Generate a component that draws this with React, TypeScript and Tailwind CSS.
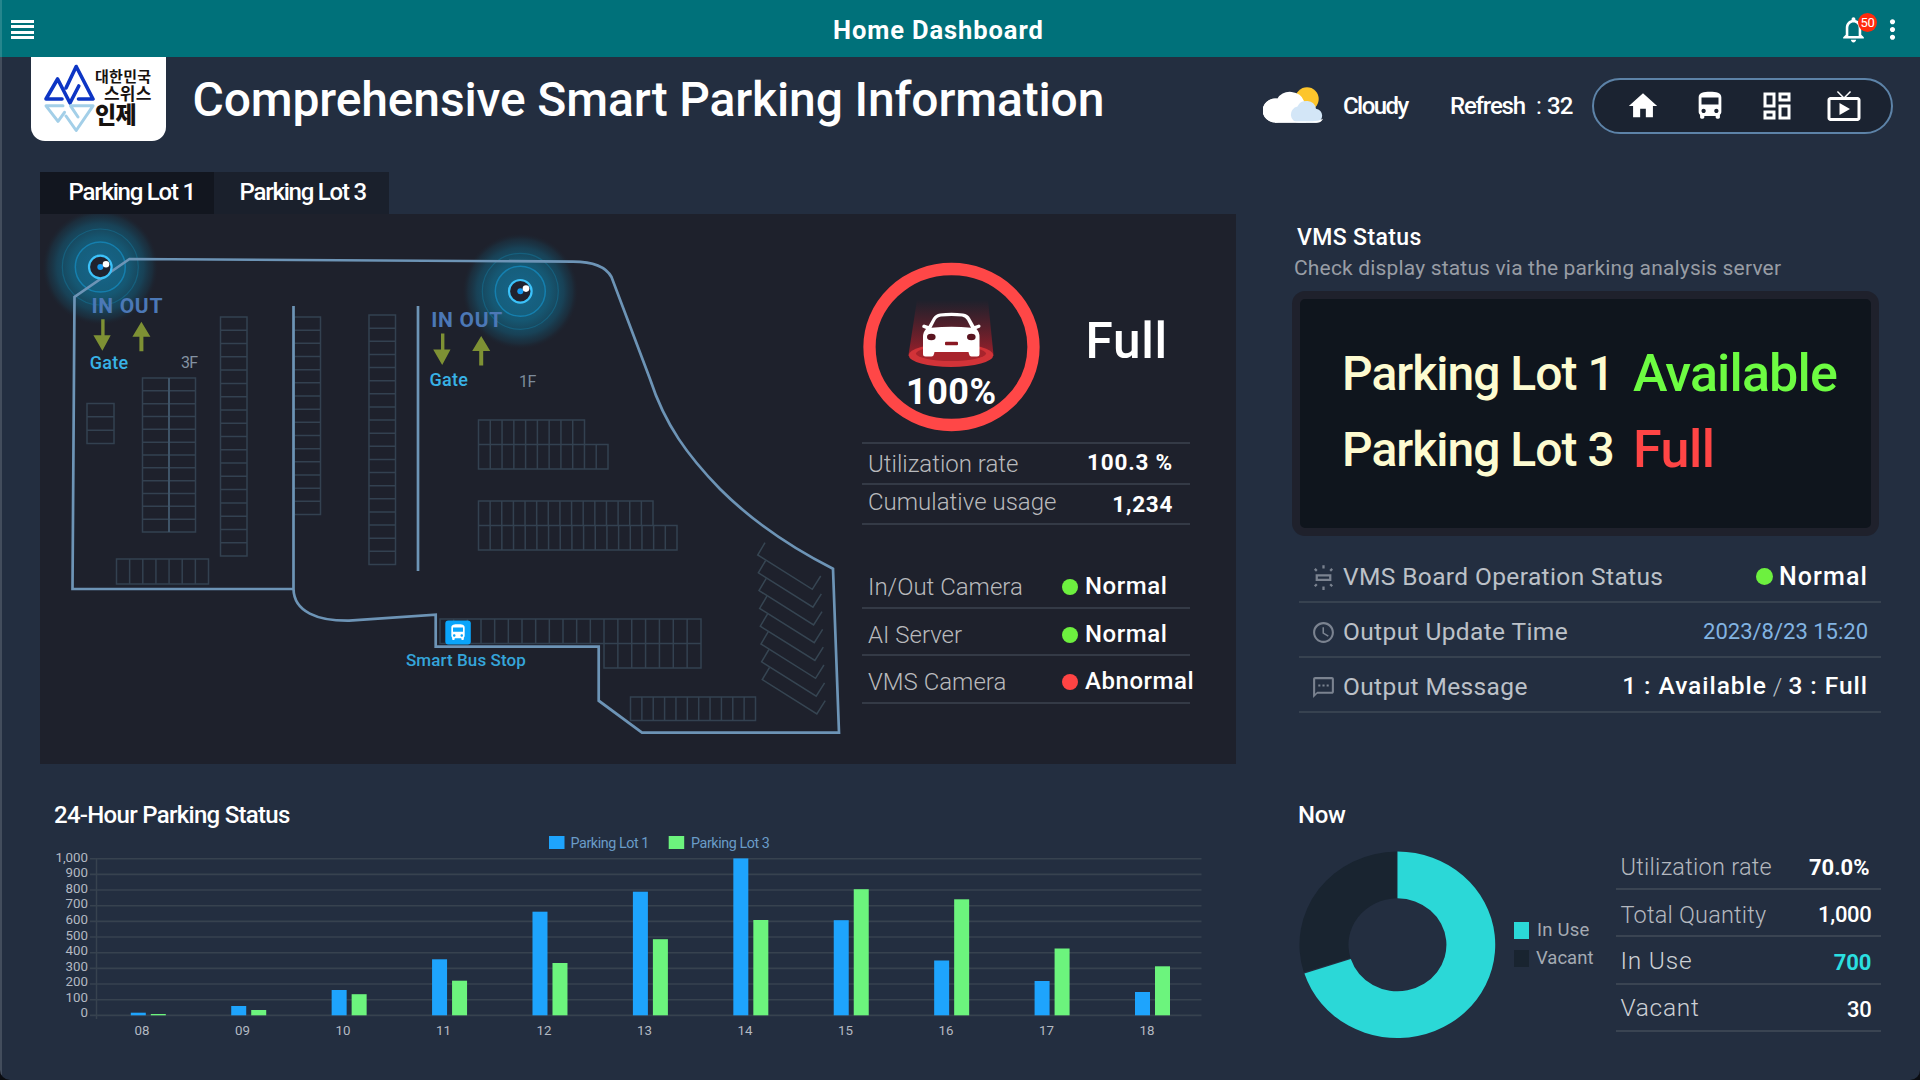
import type { ReactNode } from "react";
import {
  MdAccessTime,
  MdDirectionsBus,
  MdHome,
  MdMoreVert,
  MdNotificationsNone,
  MdOutlineDashboard,
  MdOutlineLiveTv,
  MdOutlineTextsms,
  MdOutlineWbIridescent,
} from "react-icons/md";

/* ---------- Top bar ---------- */

function TopBar() {
  return (
    <header className="flex h-[57px] shrink-0 items-center bg-[#00717a] pt-[2px]">
      <div className="w-[833px] pl-[11px]">
        <div className="flex w-[23px] flex-col gap-[2.4px]">
          <div className="h-[3px] bg-white" />
          <div className="h-[3px] bg-white" />
          <div className="h-[3px] bg-white" />
          <div className="h-[3px] bg-white" />
        </div>
      </div>
      <h1 className="mt-[2px] text-[25.5px] leading-none font-bold tracking-[0.9px] whitespace-nowrap">Home Dashboard</h1>
      <div className="mr-[12px] ml-auto flex items-center gap-[8px]">
        <div className="relative">
          <MdNotificationsNone size={31} />
          <span className="absolute -top-[1px] left-[20px] flex h-[19px] w-[19px] items-center justify-center rounded-full bg-[#ff2a0c] text-[13px] tracking-[-0.3px]">
            50
          </span>
        </div>
        <MdMoreVert size={31} />
      </div>
    </header>
  );
}

function Logo() {
  return (
    <div className="ml-[31px] flex h-[84px] w-[135px] rounded-b-[14px] bg-white text-[#17120f]">
      <svg width="64" height="84" viewBox="31 57 64 84" fill="none" strokeWidth="3.6" strokeLinecap="round" strokeLinejoin="round">
        <path d="M62 99H46l11.600-20L70 103l8.800-17" stroke="#0d35c4" />
        <path d="M66 88l10.200-21.500L93 99H78.500" stroke="#0d35c4" />
        <path d="M63 105.800H46l12 15.500 6.500-9" stroke="#a3cfe8" strokeWidth="3" />
        <path d="M66 116l10.200 14.500L93 105.800H70.500L78 117" stroke="#a3cfe8" strokeWidth="3" />
      </svg>
      <div className="flex flex-col font-['Noto_Sans_CJK_KR',sans-serif] leading-none font-bold whitespace-nowrap">
        <span className="mt-[11px] text-[15px] tracking-[0.3px]">대한민국</span>
        <span className="mt-[1px] ml-[9px] text-[17px] tracking-[0.2px]">스위스</span>
        <span className="mt-[1px] text-[23px] font-black tracking-[-0.7px]">인제</span>
      </div>
    </div>
  );
}

function WeatherIcon() {
  return (
    <svg width="61" height="40" viewBox="1263 86 61 40">
      <circle cx="1307" cy="99" r="11.700" fill="#fdc52c" />
      <path
        d="M1276 122.500a13 11.500 0 0 1 0-24h1.500a14.500 13 0 0 1 26.500 2.500l2 21.500z"
        fill="#fff"
      />
      <circle cx="1275" cy="110.500" r="12" fill="#fff" />
      <path
        d="M1299 122.700a8.500 8.200 0 0 1-1.500-16.200a9.800 9.500 0 0 1 18.500 2.300a7 7 0 0 1 0 13.900z"
        fill="#d3e6f7"
      />
      <path d="M1275 122.700h42a6.500 6.500 0 0 0 6-4q-5 3-13 2.500h-35z" fill="#fff" />
    </svg>
  );
}

function PillIcon({ children }: { children: ReactNode }) {
  return <div className="flex w-[67px] justify-center">{children}</div>;
}

function TitleRow() {
  return (
    <div className="flex h-[115px] shrink-0 items-start whitespace-nowrap">
      <Logo />
      <h2 className="mt-[15px] ml-[26.500px] text-[48px] leading-[56px] font-medium tracking-[-0.140px]">
        Comprehensive Smart Parking Information
      </h2>
      <div className="mt-[21px] mr-[27px] ml-auto flex h-[56px] items-center text-[24px] leading-none">
        <WeatherIcon />
        <span className="ml-[19px] w-[107px] font-medium tracking-[-1.550px]">Cloudy</span>
        <span className="w-[86px] font-medium tracking-[-1.200px]">Refresh</span>
        <span className="w-[11px]">:</span>
        <span className="w-[45px] font-medium tracking-[-0.900px]">32</span>
        <nav className="flex h-[56px] w-[301px] items-center justify-center rounded-full border-2 border-[#5d83a8] bg-[#1b2331] pl-[1px]">
          <PillIcon><MdHome size={34} /></PillIcon>
          <PillIcon><MdDirectionsBus size={34} /></PillIcon>
          <PillIcon><MdOutlineDashboard size={36} /></PillIcon>
          <PillIcon><MdOutlineLiveTv size={36} /></PillIcon>
        </nav>
      </div>
    </div>
  );
}

/* ---------- Parking map ---------- */

type Block = { x: number; y: number; w: number; h: number; cols: number; rows: number };

const BLOCKS: Block[] = [
  { x: 87, y: 403.5, w: 27, h: 40, cols: 1, rows: 3 },
  { x: 142.5, y: 378, w: 53, h: 154, cols: 2, rows: 12 },
  { x: 116.5, y: 559, w: 92, h: 25, cols: 7, rows: 1 },
  { x: 220.5, y: 317, w: 26.5, h: 239, cols: 1, rows: 18 },
  { x: 294, y: 317, w: 26.5, h: 197.5, cols: 1, rows: 15 },
  { x: 369, y: 315, w: 26.5, h: 249.5, cols: 1, rows: 19 },
  { x: 478.5, y: 420, w: 106, h: 24.5, cols: 9, rows: 1 },
  { x: 478.5, y: 444.5, w: 129.5, h: 24.5, cols: 11, rows: 1 },
  { x: 478.5, y: 501, w: 174.5, h: 24.5, cols: 15, rows: 1 },
  { x: 478.5, y: 525.5, w: 198.5, h: 24.5, cols: 17, rows: 1 },
  { x: 440, y: 619, w: 164, h: 24.5, cols: 12, rows: 1 },
  { x: 604, y: 619, w: 97, h: 49, cols: 7, rows: 2 },
  { x: 630.5, y: 697, w: 125, h: 23.5, cols: 11, rows: 1 },
];

function blockPath({ x, y, w, h, cols, rows }: Block) {
  let d = `M${x} ${y}h${w}v${h}h${-w}z`;
  for (let i = 1; i < cols; i++) d += `M${x + (w * i) / cols} ${y}v${h}`;
  for (let i = 1; i < rows; i++) d += `M${x} ${y + (h * i) / rows}h${w}`;
  return d;
}

function Glow({ x, y }: { x: number; y: number }) {
  return (
    <g transform={`translate(${x} ${y})`}>
      <circle r="58" fill="url(#glow)" />
      <circle r="38" fill="none" stroke="#1583ab" strokeOpacity="0.400" strokeWidth="1.200" />
      <circle r="25" fill="#1787b5" fillOpacity="0.120" stroke="#158fc4" strokeOpacity="0.700" strokeWidth="1.500" />
    </g>
  );
}

function Camera({ x, y }: { x: number; y: number }) {
  return (
    <g transform={`translate(${x} ${y})`}>
      <circle r="11.300" fill="#20222f" stroke="#3cc2fa" strokeWidth="2.200" />
      <circle r="3" fill="#149bf5" />
      <circle cx="5.700" cy="-2.700" r="3.300" fill="#fff" />
    </g>
  );
}

function Gate({ x, y, gateY }: { x: number; y: number; gateY: number }) {
  return (
    <g transform={`translate(${x} ${y})`}>
      <text x="-1.300" y="0.300" fontSize="21" fontWeight="700" letterSpacing="0.700" fill="#4c78b6">
        IN OUT
      </text>
      <g fill="#7e9134">
        <path d="M8.500 7h3.400v16h6.100l-8.300 15.500l-9-15.500h7.800z" />
        <path d="M48.700 9.500l9 15h-7v14.500h-4v-14.500h-7z" />
      </g>
      <text x="-3" y={gateY} fontSize="18" fontWeight="500" letterSpacing="0.300" fill="#38b2e6">
        Gate
      </text>
    </g>
  );
}

function ParkingMap() {
  return (
    <svg width="810" height="550" viewBox="40 214 810 550" className="shrink-0">
      <defs>
        <radialGradient id="glow">
          <stop offset="0" stopColor="#156a8d" stopOpacity="0.900" />
          <stop offset="0.500" stopColor="#14617f" stopOpacity="0.850" />
          <stop offset="0.750" stopColor="#15536d" stopOpacity="0.650" />
          <stop offset="0.900" stopColor="#183f53" stopOpacity="0.400" />
          <stop offset="1" stopColor="#1b2633" stopOpacity="0" />
        </radialGradient>
      </defs>

      <path d={BLOCKS.map(blockPath).join("")} fill="none" stroke="#334150" strokeWidth="1.500" />
      <path d="M169 378v154" stroke="#3f5468" strokeWidth="2" />
      {Array.from({ length: 8 }, (_, i) => (
        <path
          key={i}
          d="M765 542.700L757.700 555l54.600 34.300l8.400-13.300"
          transform={`translate(${i * 0.65} ${i * 17.8})`}
          fill="none"
          stroke="#364552"
          strokeWidth="1.500"
        />
      ))}

      <Glow x={100.3} y={267} />
      <Glow x={520.3} y={291.3} />

      <g fill="none" stroke="#6d94b6" strokeWidth="2.700">
        <path d="M294 589H72.500L74.500 297L129.500 259L573 261.600C594 261.600 606 267 611.500 277L650 379C665 425 688 456 720 489C752 521 790 547 833 568.800L839 732.700H642L598.700 700.700V646.700H435.700V614.700L349 620.700C318 621 294 612 293.500 589V306" />
        <path d="M418 306V571" />
      </g>

      <Camera x={100.3} y={267} />
      <Camera x={520.3} y={291.3} />
      <Gate x={92.7} y={312.3} gateY={57} />
      <Gate x={432.5} y={326.5} gateY={59.8} />

      <text x="181" y="368" fontSize="16" letterSpacing="-0.800" fill="#8492a2">3F</text>
      <text x="519" y="386.600" fontSize="16" letterSpacing="-0.500" fill="#7d8b9b">1F</text>

      <rect x="445.300" y="620.500" width="25.500" height="24" rx="3" fill="#0aa5fb" />
      <MdDirectionsBus x={448} y={622.5} size={20} color="#fff" />
      <text x="406" y="666" fontSize="17" fontWeight="500" letterSpacing="0.080" fill="#35a5da">
        Smart Bus Stop
      </text>
    </svg>
  );
}

/* ---------- Lot statistics ---------- */

function Gauge() {
  return (
    <svg width="190" height="228" viewBox="862 214 190 228" className="shrink-0 overflow-visible">
      <defs>
        <linearGradient id="beam" x1="0" y1="0" x2="0" y2="1">
          <stop offset="0" stopColor="#a01c28" stopOpacity="0" />
          <stop offset="1" stopColor="#b81f2a" stopOpacity="0.800" />
        </linearGradient>
      </defs>
      <ellipse cx="951.500" cy="347" rx="82" ry="78" fill="none" stroke="#ff4747" strokeWidth="12.300" />
      <path d="M917 300H988L993.500 355H908.500z" fill="url(#beam)" />
      <ellipse cx="951" cy="355.300" rx="42.300" ry="11.700" fill="#d23338" />
      <ellipse cx="951" cy="353.500" rx="35" ry="7.500" fill="#a8242c" />
      <path
        fill="#fff"
        fillRule="evenodd"
        d="M940 313.500Q951.500 312 963 313.500Q968 314 970 318L974.500 326L979 324.500Q981.500 325.500 980 327.500L976.500 329Q979.500 332 979.500 337V354Q979.500 356.500 977 356.500H971.500Q969.500 356.500 969 354L968.500 352H934.500L934 354Q933.500 356.500 931.500 356.500H925.500Q923 356.500 923 354V337Q923 332 926 329L922.500 327.500Q921.500 325.500 924 324.500L928.500 326L933 318Q935.500 314 940 313.500zM941 316.500Q937 317 935.500 320L931.500 327.800Q951.500 325.500 971 327.800L967 320Q965.500 317 962 316.500Q951.500 315.300 941 316.500z"
      />
      <ellipse cx="931.300" cy="337" rx="4.300" ry="3.200" fill="#5a1420" />
      <ellipse cx="971.300" cy="337" rx="4.300" ry="3.200" fill="#5a1420" />
      <rect x="945" y="341.700" width="13" height="3.600" rx="1" fill="#8a1822" />
      <text x="906" y="403.500" fontSize="36" fontWeight="700" letterSpacing="0.500" fill="#fff">
        100%
      </text>
    </svg>
  );
}

function StatusRow({ label, ok, value }: { label: string; ok: boolean; value: string }) {
  return (
    <div className="flex h-[47.500px] items-center border-b-2 border-[#343a46] pt-[7px]">
      <span className="w-[200px] shrink-0 pl-[6px] font-light text-[#b9babd]">{label}</span>
      <span
        className={
          ok
            ? "h-[16px] w-[16px] shrink-0 rounded-full bg-[#6df03f]"
            : "h-[16px] w-[16px] shrink-0 rounded-full bg-[#ff4444]"
        }
      />
      <span className="-mt-[2px] pl-[7px] font-medium tracking-[0.55px]">{value}</span>
    </div>
  );
}

function LotStats() {
  return (
    <div className="ml-[12px] w-[328px] text-[24px] leading-none whitespace-nowrap">
      <div className="flex h-[228px]">
        <Gauge />
        <span className="mt-[103px] ml-[33.500px] text-[49.500px] font-medium tracking-[0.700px]">Full</span>
      </div>
      <div className="flex h-[43px] items-center justify-between border-y-2 border-[#343a46] pr-[17px] pl-[6px]">
        <span className="font-light text-[#b9babd]">Utilization rate</span>
        <span className="-mt-[2px] text-[22.500px] font-bold tracking-[0.800px]">100.3 %</span>
      </div>
      <div className="flex h-[40px] items-center justify-between border-b-2 border-[#343a46] pr-[17px] pl-[6px]">
        <span className="-mt-[5px] font-light tracking-[0.020px] text-[#b9babd]">Cumulative usage</span>
        <span className="mt-[1px] text-[22.500px] font-bold tracking-[0.700px]">1,234</span>
      </div>
      <div className="mt-[36px]">
        <StatusRow label="In/Out Camera" ok value="Normal" />
        <StatusRow label="AI Server" ok value="Normal" />
        <StatusRow label="VMS Camera" ok={false} value="Abnormal" />
      </div>
    </div>
  );
}

/* ---------- 24-hour bar chart ---------- */

const HOURS = [
  { h: "08", lot1: 1012.7, lot3: 1014 },
  { h: "09", lot1: 1006, lot3: 1010 },
  { h: "10", lot1: 990, lot3: 994.2 },
  { h: "11", lot1: 959.3, lot3: 980.7 },
  { h: "12", lot1: 911.7, lot3: 963 },
  { h: "13", lot1: 891.7, lot3: 939.2 },
  { h: "14", lot1: 858.4, lot3: 920 },
  { h: "15", lot1: 920.2, lot3: 889.2 },
  { h: "16", lot1: 960.5, lot3: 899.3 },
  { h: "17", lot1: 981, lot3: 948.5 },
  { h: "18", lot1: 992, lot3: 966.3 },
];

const TICKS = ["1,000", "900", "800", "700", "600", "500", "400", "300", "200", "100", "0"];

function HourlyChart() {
  return (
    <svg width="1196" height="216" viewBox="40 829 1196 216">
      <rect x="549" y="836" width="15.500" height="13" fill="#1ea4fd" />
      <text x="570.500" y="848" fontSize="14.300" letterSpacing="-0.420" fill="#6a9cc8">Parking Lot 1</text>
      <rect x="668.700" y="836" width="15.500" height="13" fill="#6cf47d" />
      <text x="691" y="848" fontSize="14.300" letterSpacing="-0.420" fill="#6a9cc8">Parking Lot 3</text>
      {TICKS.map((t, i) => (
        <g key={t}>
          <path d={`M90 ${858.7 + i * 15.67}H1201.500`} stroke="#37424f" strokeWidth="1.600" />
          <text x="88" y={861.7 + i * 15.57} fontSize="13.300" textAnchor="end" fill="#b3b9c2">
            {t}
          </text>
        </g>
      ))}
      <path d="M96.500 858V1019" stroke="#37424f" strokeWidth="1.500" />
      {HOURS.map(({ h, lot1, lot3 }, i) => (
        <g key={h}>
          <rect x={130.8 + i * 100.42} y={lot1} width="15" height={1015.3 - lot1} fill="#1ea4fd" />
          <rect x={150.8 + i * 100.42} y={lot3} width="15" height={1015.3 - lot3} fill="#6cf47d" />
          <text x={142 + i * 100.5} y="1035" fontSize="13.300" textAnchor="middle" fill="#b3b9c2">
            {h}
          </text>
        </g>
      ))}
    </svg>
  );
}

function LeftColumn() {
  return (
    <div className="ml-[40px] flex w-[1196px] flex-col">
      <div className="flex h-[42px] text-[24px] leading-none font-medium whitespace-nowrap">
        <div className="w-[174px] bg-[#12161f] pt-[8px] pl-[28.500px] tracking-[-1.230px]">Parking Lot 1</div>
        <div className="w-[175px] bg-[#1a202c] pt-[8px] pl-[25.500px] tracking-[-1.230px]">Parking Lot 3</div>
      </div>
      <div className="flex h-[550px] bg-[#1e212c]">
        <ParkingMap />
        <LotStats />
      </div>
      <h3 className="mt-[37px] ml-[14px] text-[24px] leading-[28px] font-medium tracking-[-0.710px]">24-Hour Parking Status</h3>
      <HourlyChart />
    </div>
  );
}

/* ---------- VMS ---------- */

function InfoRow({ icon, label, children }: { icon: ReactNode; label: string; children: ReactNode }) {
  return (
    <div className="ml-[7px] flex h-[55px] items-center border-b-2 border-[#374250] pt-[5px] pr-[13px]">
      <span className="flex w-[44px] justify-center pl-[5px] text-[#7b8390]">{icon}</span>
      <span className="text-[24.500px] tracking-[0.380px] text-[#bcc1c8]">{label}</span>
      <span className="-mt-[1px] ml-auto flex items-center">{children}</span>
    </div>
  );
}

function VmsStatus() {
  return (
    <section className="text-[24px] leading-none whitespace-nowrap">
      <h3 className="ml-[5px] pt-[1px] text-[23px] leading-[28px] font-medium tracking-[0.380px]">VMS Status</h3>
      <p className="mt-[2px] ml-[2px] text-[21px] leading-[28px] tracking-[0.170px] text-[#989da5]">
        Check display status via the parking analysis server
      </p>
      <div className="mt-[9px] flex h-[245px] w-[587px] flex-col rounded-[13px] border-[8.500px] border-[#1f212c] bg-[#0f151d] pt-[37px] pl-[42px]">
        <div className="flex h-[76px] items-center">
          <span className="w-[291px] text-[48px] font-medium tracking-[-1.000px] text-[#fdfbd0]">Parking Lot 1</span>
          <span className="text-[52px] font-medium tracking-[-0.850px] text-[#6dfc42]">Available</span>
        </div>
        <div className="flex h-[76px] items-center">
          <span className="w-[291px] text-[48px] font-medium tracking-[-1.000px] text-[#fdfbd0]">Parking Lot 3</span>
          <span className="text-[52px] font-medium tracking-[-0.500px] text-[#ff4545]">Full</span>
        </div>
      </div>
      <div className="mt-[12px]">
        <InfoRow icon={<MdOutlineWbIridescent size={27} />} label="VMS Board Operation Status">
          <span className="mr-[6px] h-[17px] w-[17px] rounded-full bg-[#6df03f]" />
          <span className="text-[25px] font-medium tracking-[1.100px]">Normal</span>
        </InfoRow>
        <InfoRow icon={<MdAccessTime size={25} />} label="Output Update Time">
          <span className="pt-[1px] text-[22px] text-[#82b4e2]">2023/8/23 15:20</span>
        </InfoRow>
        <InfoRow icon={<MdOutlineTextsms size={25} />} label="Output Message">
          <span className="text-[24.500px] font-medium tracking-[0.960px]">1 : Available</span>
          <span className="mx-[6px] font-light text-[#bcc1c8]">/</span>
          <span className="text-[24.500px] font-medium tracking-[0.960px]">3 : Full</span>
        </InfoRow>
      </div>
    </section>
  );
}

/* ---------- Current occupancy ---------- */

function Donut() {
  return (
    <svg width="197" height="188" viewBox="1299.500 850.500 197 188" className="mt-[22px] ml-[7px]">
      <path
        d="M1398 851A97.800 93.300 0 1 1 1304.900 973.100L1351.300 958.600A49 46.500 0 1 0 1398 897.800z"
        fill="#2bd8d7"
      />
      <path
        d="M1304.300 971.800A97.800 93.300 0 0 1 1397.300 851V897.800A49 46.500 0 0 0 1351 957.500z"
        fill="#192430"
      />
    </svg>
  );
}

function SummaryRow({ label, labelClass, children }: { label: string; labelClass: string; children: ReactNode }) {
  return (
    <div className="flex h-[47.500px] items-center justify-between border-b-2 border-[#3a4452] pt-[6px] pr-[9px] pl-[5px]">
      <span className={labelClass}>{label}</span>
      {children}
    </div>
  );
}

function NowPanel() {
  return (
    <section className="mt-[88px] leading-none whitespace-nowrap">
      <h3 className="ml-[6px] text-[24px] leading-[28px] font-medium tracking-[-0.300px]">Now</h3>
      <div className="flex">
        <Donut />
        <div className="mt-[88px] ml-[18px] flex w-[100px] flex-col text-[18.500px] text-[#a4aab3]">
          <div className="flex h-[27px] items-center">
            <span className="mr-[8px] h-[17px] w-[15px] bg-[#2bd8d7]" />
            <span className="tracking-[0.200px]">In Use</span>
          </div>
          <div className="flex h-[28px] items-center">
            <span className="mr-[7px] h-[17px] w-[15px] bg-[#192430]" />
            <span>Vacant</span>
          </div>
        </div>
        <div className="mt-[13px] ml-[1.500px] w-[265px] text-[22px]">
          <SummaryRow label="Utilization rate" labelClass="text-[23.500px] font-light tracking-[0.260px] text-[#b4b8bf]">
            <span className="mr-[2px] font-bold">70.0%</span>
          </SummaryRow>
          <SummaryRow label="Total Quantity" labelClass="text-[23.500px] font-light tracking-[0.200px] text-[#b4b8bf]">
            <span className="font-medium tracking-[-0.300px]">1,000</span>
          </SummaryRow>
          <SummaryRow label="In Use" labelClass="-mt-[3px] text-[24.500px] font-light tracking-[0.800px] text-[#cdd0d5]">
            <span className="font-bold text-[#2bdfe0]">700</span>
          </SummaryRow>
          <SummaryRow label="Vacant" labelClass="-mt-[4px] text-[24.500px] font-light tracking-[0.700px] text-[#cdd0d5]">
            <span className="font-medium tracking-[-0.300px]">30</span>
          </SummaryRow>
        </div>
      </div>
    </section>
  );
}

export default function App() {
  return (
    <div className="h-[1080px] w-[1920px] overflow-hidden bg-[#0b0d12] font-[Roboto,sans-serif] text-white">
      <div className="relative flex h-[1080px] flex-col overflow-hidden rounded-b-[10px] bg-[#232e40]">
        <TopBar />
        <TitleRow />
        <main className="flex flex-1">
          <LeftColumn />
          <div className="mt-[51px] ml-[56px] w-[589px]">
            <VmsStatus />
            <NowPanel />
          </div>
        </main>
        <div className="absolute inset-y-0 left-0 w-[2px] bg-white/15" />
      </div>
    </div>
  );
}
